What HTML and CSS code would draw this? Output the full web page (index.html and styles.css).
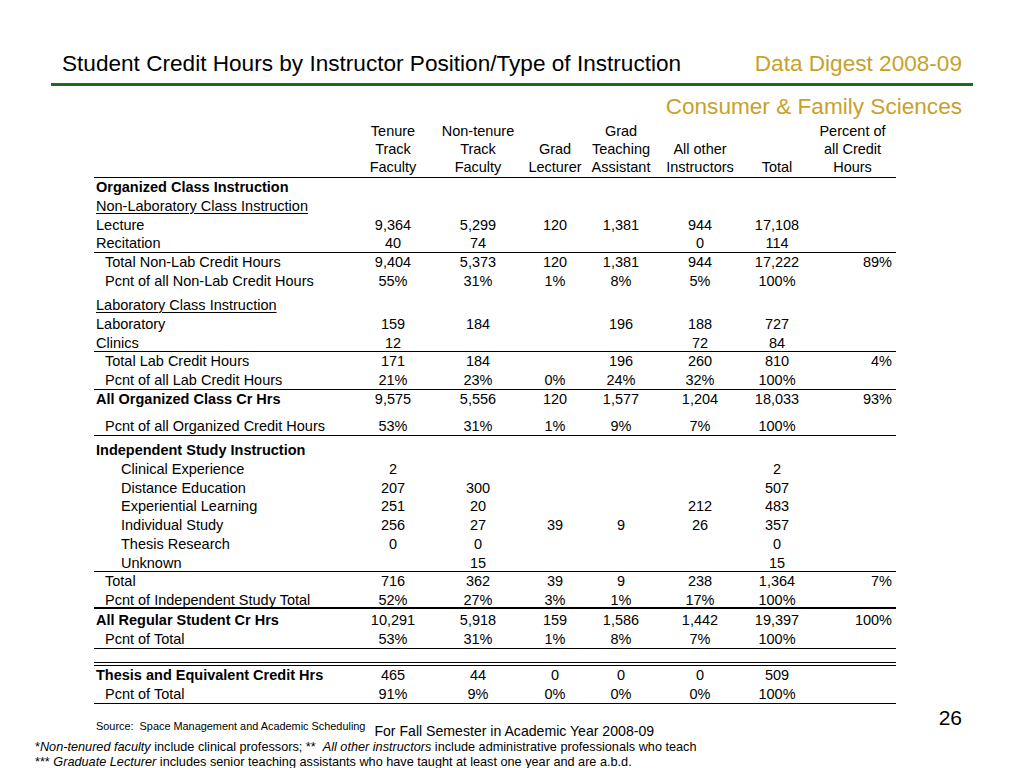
FILE: index.html
```html
<!DOCTYPE html>
<html lang="en">
<head>
<meta charset="utf-8">
<title>Student Credit Hours by Instructor Position/Type of Instruction</title>
<link rel="stylesheet" href="styles.css">
</head>
<body>
<header class="slide-header">
  <h1 class="title">Student Credit Hours by Instructor Position/Type of Instruction</h1>
  <div class="digest">Data Digest 2008-09</div>
</header>
<div class="dept">Consumer &amp; Family Sciences</div>

<section class="sheet">
  <div class="r head">
    <div class="lbl"></div>
    <div class="n">Tenure<br>Track<br>Faculty</div>
    <div class="n">Non-tenure<br>Track<br>Faculty</div>
    <div class="n">Grad<br>Lecturer</div>
    <div class="n">Grad<br>Teaching<br>Assistant</div>
    <div class="n">All other<br>Instructors</div>
    <div class="n">Total</div>
    <div class="n pc">Percent of<br>all Credit<br>Hours</div>
  </div>

  <div class="r"><div class="lbl b">Organized Class Instruction</div></div>
  <div class="r"><div class="lbl"><span class="u">Non-Laboratory Class Instruction</span></div></div>
  <div class="r"><div class="lbl">Lecture</div><div class="n">9,364</div><div class="n">5,299</div><div class="n">120</div><div class="n">1,381</div><div class="n">944</div><div class="n">17,108</div><div class="p"></div></div>
  <div class="r line"><div class="lbl">Recitation</div><div class="n">40</div><div class="n">74</div><div class="n"></div><div class="n"></div><div class="n">0</div><div class="n">114</div><div class="p"></div></div>
  <div class="r"><div class="lbl i1">Total Non-Lab Credit Hours</div><div class="n">9,404</div><div class="n">5,373</div><div class="n">120</div><div class="n">1,381</div><div class="n">944</div><div class="n">17,222</div><div class="p">89%</div></div>
  <div class="r short"><div class="lbl i1">Pcnt of all Non-Lab Credit Hours</div><div class="n">55%</div><div class="n">31%</div><div class="n">1%</div><div class="n">8%</div><div class="n">5%</div><div class="n">100%</div><div class="p"></div></div>

  <div class="r gap-a"><div class="lbl"><span class="u">Laboratory Class Instruction</span></div></div>
  <div class="r"><div class="lbl">Laboratory</div><div class="n">159</div><div class="n">184</div><div class="n"></div><div class="n">196</div><div class="n">188</div><div class="n">727</div><div class="p"></div></div>
  <div class="r line"><div class="lbl">Clinics</div><div class="n">12</div><div class="n"></div><div class="n"></div><div class="n"></div><div class="n">72</div><div class="n">84</div><div class="p"></div></div>
  <div class="r"><div class="lbl i1">Total Lab Credit Hours</div><div class="n">171</div><div class="n">184</div><div class="n"></div><div class="n">196</div><div class="n">260</div><div class="n">810</div><div class="p">4%</div></div>
  <div class="r line"><div class="lbl i1">Pcnt of all Lab Credit Hours</div><div class="n">21%</div><div class="n">23%</div><div class="n">0%</div><div class="n">24%</div><div class="n">32%</div><div class="n">100%</div><div class="p"></div></div>
  <div class="r"><div class="lbl b">All Organized Class Cr Hrs</div><div class="n">9,575</div><div class="n">5,556</div><div class="n">120</div><div class="n">1,577</div><div class="n">1,204</div><div class="n">18,033</div><div class="p">93%</div></div>
  <div class="r line gap-b"><div class="lbl i1">Pcnt of all Organized Credit Hours</div><div class="n">53%</div><div class="n">31%</div><div class="n">1%</div><div class="n">9%</div><div class="n">7%</div><div class="n">100%</div><div class="p"></div></div>

  <div class="r gap-c"><div class="lbl b">Independent Study Instruction</div></div>
  <div class="r"><div class="lbl i2">Clinical Experience</div><div class="n">2</div><div class="n"></div><div class="n"></div><div class="n"></div><div class="n"></div><div class="n">2</div><div class="p"></div></div>
  <div class="r"><div class="lbl i2">Distance Education</div><div class="n">207</div><div class="n">300</div><div class="n"></div><div class="n"></div><div class="n"></div><div class="n">507</div><div class="p"></div></div>
  <div class="r"><div class="lbl i2">Experiential Learning</div><div class="n">251</div><div class="n">20</div><div class="n"></div><div class="n"></div><div class="n">212</div><div class="n">483</div><div class="p"></div></div>
  <div class="r"><div class="lbl i2">Individual Study</div><div class="n">256</div><div class="n">27</div><div class="n">39</div><div class="n">9</div><div class="n">26</div><div class="n">357</div><div class="p"></div></div>
  <div class="r"><div class="lbl i2">Thesis Research</div><div class="n">0</div><div class="n">0</div><div class="n"></div><div class="n"></div><div class="n"></div><div class="n">0</div><div class="p"></div></div>
  <div class="r line short"><div class="lbl i2">Unknown</div><div class="n"></div><div class="n">15</div><div class="n"></div><div class="n"></div><div class="n"></div><div class="n">15</div><div class="p"></div></div>
  <div class="r"><div class="lbl i1">Total</div><div class="n">716</div><div class="n">362</div><div class="n">39</div><div class="n">9</div><div class="n">238</div><div class="n">1,364</div><div class="p">7%</div></div>
  <div class="r line thick"><div class="lbl i1">Pcnt of Independent Study Total</div><div class="n">52%</div><div class="n">27%</div><div class="n">3%</div><div class="n">1%</div><div class="n">17%</div><div class="n">100%</div><div class="p"></div></div>
  <div class="r gap-d"><div class="lbl b">All Regular Student Cr Hrs</div><div class="n">10,291</div><div class="n">5,918</div><div class="n">159</div><div class="n">1,586</div><div class="n">1,442</div><div class="n">19,397</div><div class="p">100%</div></div>
  <div class="r line"><div class="lbl i1">Pcnt of Total</div><div class="n">53%</div><div class="n">31%</div><div class="n">1%</div><div class="n">8%</div><div class="n">7%</div><div class="n">100%</div><div class="p"></div></div>

  <div class="spacer"></div>

  <div class="r"><div class="lbl b">Thesis and Equivalent Credit Hrs</div><div class="n">465</div><div class="n">44</div><div class="n">0</div><div class="n">0</div><div class="n">0</div><div class="n">509</div><div class="p"></div></div>
  <div class="r line"><div class="lbl i1">Pcnt of Total</div><div class="n">91%</div><div class="n">9%</div><div class="n">0%</div><div class="n">0%</div><div class="n">0%</div><div class="n">100%</div><div class="p"></div></div>
</section>

<footer class="foot">
  <div class="foot-top">
    <span class="source">Source:&nbsp; Space Management and Academic Scheduling</span>
    <span class="term">For Fall Semester in Academic Year 2008-09</span>
    <span class="page">26</span>
  </div>
  <div class="notes">
    <p>*<em>Non-tenured faculty</em> include clinical professors; ** &nbsp;<em>All other instructors</em> include administrative professionals who teach</p>
    <p>*** <em>Graduate Lecturer</em> includes senior teaching assistants who have taught at least one year and are a.b.d.</p>
  </div>
</footer>
</body>
</html>
```
FILE: styles.css
```css
html, body {
  margin: 0;
  padding: 0;
  background: #ffffff;
}

body {
  width: 1024px;
  height: 768px;
  overflow: hidden;
  font-family: "Liberation Sans", Arial, sans-serif;
  color: #000000;
}

.slide-header {
  margin: 50px 51px 0 51px;
  padding: 0 11px 6px 11px;
  border-bottom: 3px solid #1e6b1e;
  display: flex;
  justify-content: space-between;
  align-items: baseline;
  font-size: 22.6px;
  line-height: 27px;
}

.title {
  margin: 0;
  font-size: inherit;
  font-weight: normal;
}

.digest {
  color: #c9a12a;
}

.dept {
  margin-top: 7px;
  padding-right: 62px;
  text-align: right;
  font-size: 22.6px;
  line-height: 27px;
  color: #c9a12a;
}

.sheet {
  margin: 1.5px 0 0 94px;
  width: 802px;
  font-size: 14.5px;
}

.r {
  display: grid;
  grid-template-columns: 256px 86px 84px 70px 62px 96px 58px 90px;
  height: 18.8px;
  line-height: 18.8px;
  box-sizing: border-box;
  white-space: nowrap;
}

.r.short {
  height: 18px;
}

.r.head {
  height: 56.5px;
  line-height: 18.3px;
  border-bottom: 1.6px solid #000;
  align-items: end;
}

.r.head > div {
  align-self: start;
  display: flex;
  flex-direction: column;
  justify-content: flex-end;
  height: 54.9px;
}

.r.head .pc {
  text-align: center;
  padding: 0 0 0 3px;
}

.line {
  border-bottom: 1.6px solid #000;
}

.line.thick {
  border-bottom: 2.6px solid #000;
}

.lbl {
  padding-left: 2px;
}

.lbl.i1 {
  padding-left: 11px;
}

.lbl.i2 {
  padding-left: 27px;
}

.b {
  font-weight: bold;
}

.u {
  text-decoration: underline;
  text-decoration-thickness: 1px;
  text-underline-offset: 2px;
}

.n {
  text-align: center;
}

.p {
  text-align: right;
  padding-right: 4px;
}

.gap-a {
  margin-top: 6px;
}

.gap-b {
  margin-top: 8px;
}

.gap-c {
  margin-top: 5.5px;
}

.gap-d {
  margin-top: 2px;
}

.spacer {
  height: 16.9px;
  box-sizing: border-box;
  border-bottom: 4px double #000;
}

.foot-top {
  display: flex;
  align-items: flex-start;
  padding: 0 62px 0 96px;
}

.source {
  font-size: 10.9px;
  line-height: 13px;
  margin-top: 16.5px;
  white-space: nowrap;
}

.term {
  font-size: 14.1px;
  line-height: 16px;
  margin-top: 19px;
  margin-left: 9px;
  white-space: nowrap;
}

.page {
  margin-left: auto;
  font-size: 21px;
  line-height: 24px;
  margin-top: 2px;
}

.notes {
  padding-left: 35px;
  margin-top: 1px;
  font-size: 12.7px;
  line-height: 15px;
}

.notes p {
  margin: 0;
  white-space: nowrap;
}
```
